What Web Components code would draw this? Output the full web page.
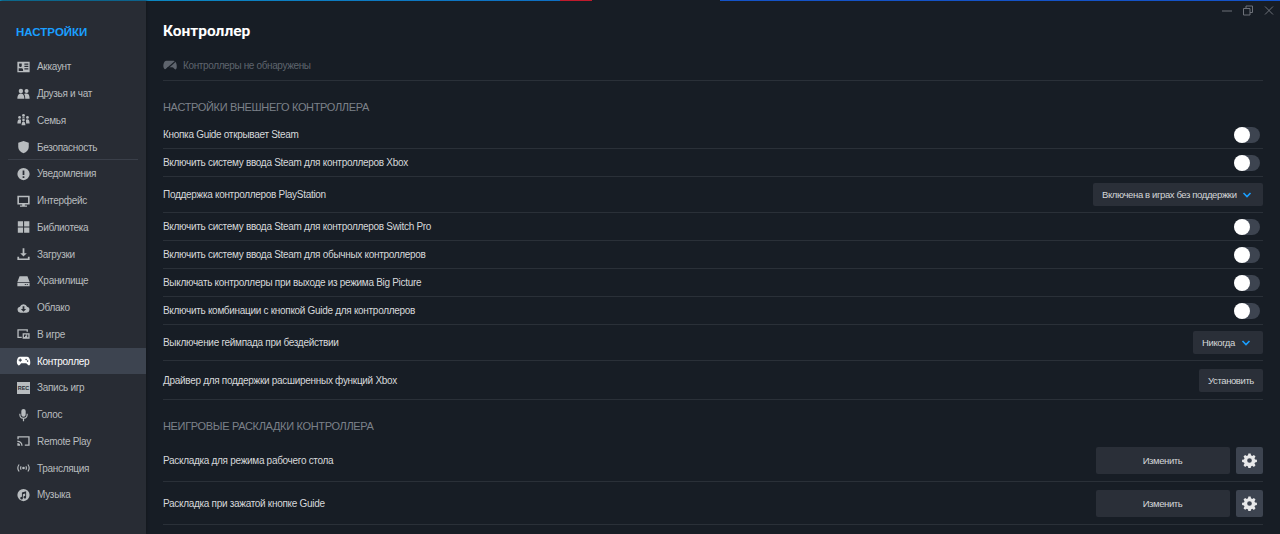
<!DOCTYPE html>
<html lang="ru"><head><meta charset="utf-8"><style>
html,body{margin:0;height:100%;background:#171d25}
body{width:1280px;height:534px;overflow:hidden;font-family:"Liberation Sans",Arial,sans-serif}
</style></head><body>
<settings-app></settings-app>
<script>
const ic={
acc:'<path fill-rule="evenodd" d="M1 2h14v12H1zM3 4v2.500a1.500 1.500 0 003 0V4zM2.500 9.500v3h5v-1.500c0-1-1-1.500-2.500-1.500zm6.500-5.500v1.400h4.500V4zm0 2.700v1.400h4.500V6.700zM9 9.400v1.400h4.500V9.400z"/>',
fr:'<circle cx="5" cy="4.500" r="2.500"/><circle cx="11.500" cy="4.500" r="2.300"/><path d="M1 13.500c0-2 .5-6 4-6s4 4 4 6zM10 13.500c0-2-.3-4.500-1.300-5.600.8-.5 1.800-.6 2.800-.6 3 0 3.500 3.500 3.500 6.200z"/>',
fam:'<circle cx="3.500" cy="5" r="1.600"/><circle cx="12.500" cy="5" r="1.600"/><circle cx="8" cy="2.800" r="1.600"/><circle cx="8" cy="8" r="1.500"/><path d="M1 12c0-3.500 1-5 2.500-5 .8 0 1.300.3 1.700.8L5 12zM15 12c0-3.500-1-5-2.500-5-.8 0-1.300.3-1.700.8L11 12zM5.800 14c0-2.800 1-4.300 2.200-4.300s2.200 1.500 2.200 4.300zM6.200 6.300C6.400 5.200 7 4.800 8 4.800s1.600.4 1.800 1.500c-1-.5-2.600-.5-3.600 0z"/>',
sec:'<path d="M8 1l6 2v5c0 3.500-2.500 5.800-6 7-3.500-1.200-6-3.500-6-7V3z"/>',
note:'<path fill-rule="evenodd" d="M8 1a7 7 0 110 14A7 7 0 018 1zM7 4v5h2V4zm0 6.500v2h2v-2z"/>',
ui:'<path fill-rule="evenodd" d="M1 2h14v10H9.500v1H12v1.500H4V13h2.500v-1H1zm1.800 1.800v6.400h10.400V3.800z"/>',
lib:'<path d="M1.500 1.500h6v6h-6zM8.700 1.500h6v6h-6zM1.500 8.700h6v6h-6zM8.700 8.700h6v6h-6z"/>',
dl:'<path d="M7 1.500h2v5.500h2.800L8 10.800 4.200 7H7zM1 11h2v2h10v-2h2v3.800H1z"/>',
hdd:'<path fill-rule="evenodd" d="M3.500 2.500h9L15 9H1zM1 10h14v4H1zm8.500 1.300v1.200h1.200v-1.200zm2.200 0v1.200h1.200v-1.200z"/>',
cl:'<path fill-rule="evenodd" d="M4.500 13.500a3.500 3.500 0 01-.6-6.900 4.300 4.300 0 018.200 0 3.500 3.500 0 01-.6 6.900zM7 6v3H5l3 3.200L11 9H9V6z"/>',
gm:'<path d="M1 2.500h12v3h-1.500V4h-9v7H6v1.500H1z"/><path fill-rule="evenodd" d="M7 7h8v6.500H7zM8.500 11.500h1.300V10h1.400V8.500H8.500zm3.700-2.800v3h1.300v-3z"/>',
pad:'<path d="M4 3h8c2 0 3 1.500 3.500 4.500.4 2.500.5 5.500-1.200 5.500-1.500 0-2.300-2.500-3.800-2.500h-5C5 10.500 4.200 13 2.700 13 1 13 .1 10 .5 7.500 1 4.500 2 3 4 3z"/><path fill="#3d4450" d="M3.700 5.200h1.200v1.200h1.200v1.200H4.900v1.200H3.700V7.600H2.500V6.400h1.200zM11 5.300a.9.9 0 110 1.800.9.9 0 010-1.800zm1.700 1.900a.9.9 0 110 1.800.9.9 0 010-1.800z"/>',
mic:'<path d="M8 1a2.500 2.500 0 012.500 2.500v4a2.500 2.500 0 01-5 0v-4A2.500 2.500 0 018 1z"/><path d="M3.200 6.500h1.300v1.200a3.500 3.500 0 007 0V6.500h1.300v1.200A4.800 4.800 0 018.700 12.400V15H7.300v-2.600A4.800 4.800 0 013.200 7.700z"/>',
rp:'<path d="M1 2.500h14v11H9.500v-1.500h4V4h-11v2H1z"/><path d="M1 7.500a6 6 0 016 6H5.500A4.500 4.500 0 001 9zM1 10.300a3.200 3.200 0 013.200 3.200H1z"/>',
br:'<circle cx="8" cy="8" r="1.500"/><path fill="none" stroke="currentColor" stroke-width="1.300" d="M3 4c-1.800 2.400-1.800 5.600 0 8M13 4c1.800 2.400 1.800 5.600 0 8M5.200 6c-.7 1.200-.7 2.800 0 4M10.800 6c.7 1.200.7 2.800 0 4"/>',
mus:'<path fill-rule="evenodd" d="M8 1a7 7 0 110 14A7 7 0 018 1zM11 3.800L6.200 5v5.200a1.500 1.500 0 101.100 1.400V7l2.600-.6v2.800a1.500 1.500 0 101.100 1.400z"/>',
off:'<path d="M4 3h8c2 0 3 1.500 3.500 4.500.4 2.500.5 5.500-1.200 5.500-1.500 0-2.300-2.500-3.800-2.500h-5C5 10.500 4.200 13 2.700 13 1 13 .1 10 .5 7.500 1 4.500 2 3 4 3z"/><path fill="none" stroke="#171d25" stroke-width="1.500" d="M2 14.500L15 3"/>',
gear:'<path fill-rule="evenodd" d="M6.800 1h2.400l.4 2 1.300.6 1.800-1.100 1.700 1.700-1.100 1.800.6 1.300 2 .4v2.400l-2 .4-.6 1.300 1.100 1.800-1.700 1.700-1.800-1.100-1.300.6-.4 2H6.800l-.4-2-1.300-.6-1.800 1.100-1.700-1.700 1.100-1.800-.6-1.300-2-.4V7.700l2-.4.6-1.300-1.100-1.800 1.700-1.700 1.800 1.100 1.300-.6zM8 6a2.500 2.500 0 100 5 2.500 2.500 0 000-5z" transform="translate(0 -.5)"/>'
};
const svg=(n,s=16)=>`<svg width="${s}" height="${s}" viewBox="0 0 16 16" fill="currentColor" aria-hidden="true">${ic[n]}</svg>`;
const def=(name,css,html)=>customElements.define(name,class extends HTMLElement{
 connectedCallback(){if(this.shadowRoot)return;const r=this.attachShadow({mode:'open'});r.innerHTML=`<style>${css}</style>`+html(this)}
});
def('nav-item',`:host{display:flex;align-items:center;height:26.75px;padding-left:15px;gap:5px;color:#b8bcbf;font-size:10px;letter-spacing:-.3px;box-sizing:border-box;position:relative}
:host([active]){background:#3d4450;color:#fff}
svg{flex:none;width:17px;height:14px}
.r{flex:none;width:17px;height:14px;display:flex;align-items:center;justify-content:center}
.rec{width:13px;height:12px;background:#b8bcbf;color:#282c34;font:bold 5.500px/12px "Liberation Sans",sans-serif;letter-spacing:0;text-align:center}
:host([sep])::after{content:"";position:absolute;left:8px;right:8px;bottom:0;height:1px;background:#3a3f49}`,
 e=>(e.getAttribute('icon')=='rec'?'<span class="r"><span class="rec">REC</span></span>':svg(e.getAttribute('icon')))+'<slot></slot>');
def('side-bar',`:host{display:block;flex:none;width:146px;height:533px;background:#282c34;box-sizing:border-box;padding-top:52.400px;box-shadow:1px 0 2px #14181e}
h2{margin:0 0 0 16px;height:0;position:relative;top:-27.400px;font:bold 11.500px "Liberation Sans",sans-serif;color:#1a9fff;line-height:12px}`,()=>'<h2>НАСТРОЙКИ</h2><slot></slot>');
def('tog-gle',`:host{display:block;width:26px;height:16px;border-radius:8px;background:#3d4450;position:relative;margin-right:3px}
i{position:absolute;left:0;top:0;width:16px;height:16px;border-radius:50%;background:#fff}`,()=>'<i></i>');
def('drop-down',`:host{display:flex;align-items:center;justify-content:space-between;height:23px;box-sizing:border-box;padding:0 12px 0 9px;background:#2a2f38;border-radius:2px;color:#d5d7d9;font-size:9.500px;letter-spacing:-.38px;white-space:nowrap}
svg{margin-left:5px;flex:none}`,()=>'<slot></slot><svg width="10" height="6" viewBox="0 0 10 6" fill="none" stroke="#1a9fff" stroke-width="1.600"><path d="M1.500 1l3.500 3.500L8.500 1"/></svg>');
def('act-btn',`:host{display:flex;align-items:center;justify-content:center;height:23px;background:#2a2f38;border-radius:2px;color:#d5d7d9;font-size:9.500px;letter-spacing:-.4px}`,()=>'<slot></slot>');
def('set-row',`:host{display:flex;align-items:center;justify-content:space-between;box-sizing:border-box;border-bottom:1px solid #2a3038;color:#d6d8da;font-size:10px;letter-spacing:-.3px}`,()=>'<slot name="t"></slot><slot></slot>');
def('sec-head',`:host{display:block;color:#7c8189;font-size:11px;letter-spacing:-.33px;line-height:14px}`,()=>'<slot></slot>');
def('gear-btn',`:host{display:flex;align-items:center;justify-content:center;width:27px;height:27px;background:#3d4450;border-radius:2px;color:#e8e9ea;margin-left:6.500px}`,()=>svg('gear',15));
def('win-ctl',`:host{display:flex;position:absolute;top:5px;right:6px;gap:11px;color:#6d7179}svg{display:block}`,()=>`<svg width="10" height="11" viewBox="0 0 10 11" stroke="currentColor" fill="none"><path d="M0 6h10"/></svg><svg width="10" height="11" viewBox="0 0 10 11" stroke="currentColor" fill="none"><path d="M.5 3.500h6.500v6.500H.5zM3 3.500V1h6.500v6.500H7"/></svg><svg width="10" height="11" viewBox="0 0 10 11" stroke="currentColor" fill="none"><path d="M1 1.500l8 8M9 1.500l-8 8"/></svg>`);
def('settings-app',`:host{display:block;width:1280px;height:534px;position:relative;overflow:hidden;background:#171d25}
.top{height:1px;display:flex}.top i{display:block;height:1px}
.body{display:flex;height:533px}
main{flex:1;padding:0 17px 0 17px}
h1{margin:0;font:700 15.500px/1 Roboto,sans-serif;color:#fff;padding-top:23px;height:27px}
.none{display:flex;align-items:center;gap:6px;height:14px;padding:7px 0 8px;color:#5e646d;font-size:10px;letter-spacing:-.37px;border-bottom:1px solid #2a3038}
sec-head{margin-top:19px;margin-bottom:7px}`,()=>`
<div class="top"><i style="width:560px;background:linear-gradient(90deg,#0a8fbf,#0e6fc4)"></i><i style="width:32px;background:#c01a2c"></i><i style="width:128px"></i><i style="width:560px;background:#1453c8"></i></div>
<div class="body">
<side-bar>
<nav-item icon="acc">Аккаунт</nav-item><nav-item icon="fr">Друзья и чат</nav-item><nav-item icon="fam">Семья</nav-item><nav-item icon="sec" sep>Безопасность</nav-item>
<nav-item icon="note">Уведомления</nav-item><nav-item icon="ui">Интерфейс</nav-item><nav-item icon="lib">Библиотека</nav-item><nav-item icon="dl">Загрузки</nav-item><nav-item icon="hdd">Хранилище</nav-item><nav-item icon="cl">Облако</nav-item><nav-item icon="gm">В игре</nav-item>
<nav-item icon="pad" active>Контроллер</nav-item><nav-item icon="rec">Запись игр</nav-item><nav-item icon="mic">Голос</nav-item><nav-item icon="rp">Remote Play</nav-item><nav-item icon="br">Трансляция</nav-item><nav-item icon="mus">Музыка</nav-item>
</side-bar>
<main>
<h1>Контроллер</h1>
<div class="none">${svg('off',14)}<span>Контроллеры не обнаружены</span></div>
<sec-head>НАСТРОЙКИ ВНЕШНЕГО КОНТРОЛЛЕРА</sec-head>
<set-row style="height:28px"><span slot="t">Кнопка Guide открывает Steam</span><tog-gle></tog-gle></set-row>
<set-row style="height:28px"><span slot="t">Включить систему ввода Steam для контроллеров Xbox</span><tog-gle></tog-gle></set-row>
<set-row style="height:36px"><span slot="t">Поддержка контроллеров PlayStation</span><drop-down style="width:170px">Включена в играх без поддержки</drop-down></set-row>
<set-row style="height:28px"><span slot="t">Включить систему ввода Steam для контроллеров Switch Pro</span><tog-gle></tog-gle></set-row>
<set-row style="height:28px"><span slot="t">Включить систему ввода Steam для обычных контроллеров</span><tog-gle></tog-gle></set-row>
<set-row style="height:28px"><span slot="t">Выключать контроллеры при выходе из режима Big Picture</span><tog-gle></tog-gle></set-row>
<set-row style="height:28px"><span slot="t">Включить комбинации с кнопкой Guide для контроллеров</span><tog-gle></tog-gle></set-row>
<set-row style="height:36px"><span slot="t">Выключение геймпада при бездействии</span><drop-down style="width:70px">Никогда</drop-down></set-row>
<set-row style="height:39px"><span slot="t">Драйвер для поддержки расширенных функций Xbox</span><act-btn style="width:64px">Установить</act-btn></set-row>
<sec-head>НЕИГРОВЫЕ РАСКЛАДКИ КОНТРОЛЛЕРА</sec-head>
<set-row style="height:42px"><span slot="t">Раскладка для режима рабочего стола</span><span style="display:flex"><act-btn style="height:27px;width:134px">Изменить</act-btn><gear-btn></gear-btn></span></set-row>
<set-row style="height:43px"><span slot="t">Раскладка при зажатой кнопке Guide</span><span style="display:flex"><act-btn style="height:27px;width:134px">Изменить</act-btn><gear-btn></gear-btn></span></set-row>
</main></div><win-ctl></win-ctl>`);
</script></body></html>
